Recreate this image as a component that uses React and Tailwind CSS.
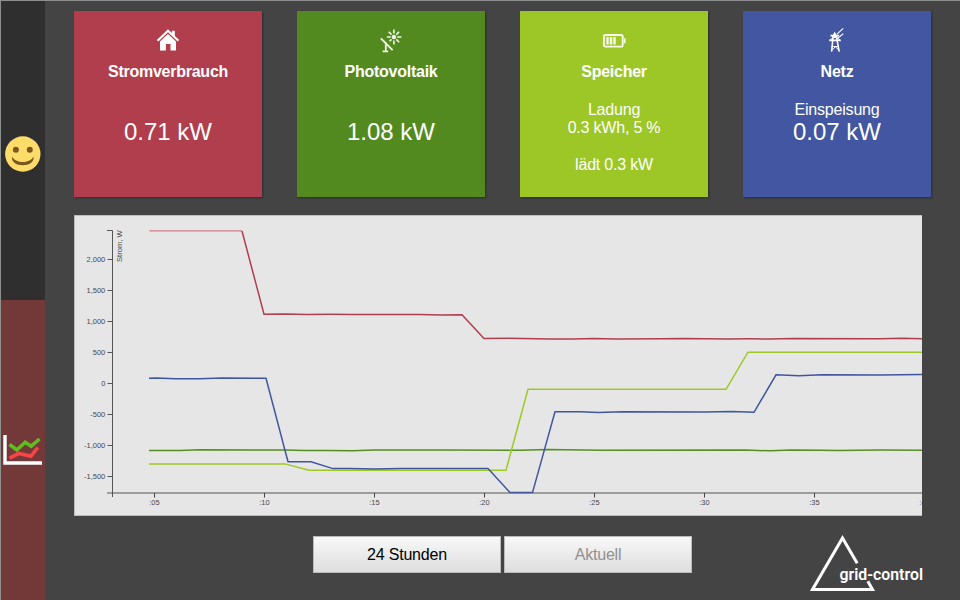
import React from "react";

const FONT = "font-['Liberation_Sans',Arial,sans-serif]";

function HouseIcon() {
  return (
    <svg width="24" height="26" viewBox="0 0 24 26" className="block">
      <path d="M1.6 13.8 12 3.8l10.4 10" fill="none" stroke="#fff" strokeWidth="2.1" />
      <path d="M15.9 3.8h2.9v6l-2.9-2.8z" fill="#fff" />
      <path d="M4 14.4 12 7l8 7.400v9h-5.500v-6.300h-4.600v6.300H4z" fill="#fff" />
    </svg>
  );
}

function SolarIcon() {
  return (
    <svg width="24" height="26" viewBox="0 0 24 26" className="block" stroke="#f2f8e8" fill="none">
      <circle cx="14.9" cy="10" r="2.2" fill="#f2f8e8" stroke="none" />
      <path
        d="M14.9 2.6v4M14.9 13.600v4M7.800 10h3.900M18.200 10h4.200M9.700 4.800l2.800 2.800M20.100 4.800l-2.800 2.800M20.100 15.200l-2.800-2.800M12.500 12.400l-1.900 1.900"
        strokeWidth="1.6"
      />
      <path d="M1.900 11.400 13.600 23.200" strokeWidth="1.9" />
      <path d="M6.800 15.500v8.700M3.600 24.400h5.600" strokeWidth="1.8" />
    </svg>
  );
}

function BatteryIcon() {
  return (
    <svg width="24" height="26" viewBox="0 0 24 26" className="block">
      <rect x="1.9" y="8" width="18.8" height="11.6" rx="1.6" fill="none" stroke="#fafdf0" strokeWidth="1.9" />
      <path d="M4.300 10h2.400v7.600H4.300zM7.800 10h2.400v7.600H7.800zM11.300 10h2.400v7.600h-2.400z" fill="#fafdf0" />
      <path d="M22.800 11.200v5" stroke="#fafdf0" strokeWidth="1.500" />
    </svg>
  );
}

function PylonIcon() {
  return (
    <svg width="24" height="26" viewBox="0 0 24 26" className="block" stroke="#fff" fill="none">
      <path d="M8.200 8.500 6.600 24.600M11.200 8.500l3 16.100" strokeWidth="1.600" />
      <path d="M9.700 4.400 12 8.900l-.6 2.200H8l-.6-2.200z" fill="#fff" stroke="none" />
      <path d="M5.400 8.700h8.700M4.300 13.300h11.500" strokeWidth="1.700" />
      <path d="M5 12.800 9 10.300h2l4 2.500M7.400 19.500h6M7.200 23l3.200-3.300 3.200 3.300" strokeWidth="1" />
      <path d="M12 7.200 18.200 1.300M12.300 11.600l5.900-4.800" strokeWidth="1.100" />
    </svg>
  );
}

function Card({ color, icon, title, children }) {
  return (
    <section
      className={`flex h-[186px] w-[188px] flex-col items-center pt-[16px] text-white shadow-[1px_1px_2px_rgba(0,0,0,0.35)] ${color}`}
    >
      {icon}
      <h2 className="mt-[10px] text-[16px] leading-[18px] font-bold tracking-[-0.25px] whitespace-nowrap">{title}</h2>
      {children}
    </section>
  );
}

const series = [
  {
    color: "#54901f",
    points:
      "149,450.5 180,450.5 200,449.8 285,450 305,450.6 330,450.4 352,450.8 375,450.1 440,450.1 520,450.2 548,449.5 600,450.3 745,450.1 770,450.8 792,450.1 820,450.2 838,450.6 880,450.1 922,450.3",
  },
  {
    color: "#9dc926",
    points: "149,463.9 285,463.9 309,470.3 506,470.3 528,389.3 726,389.3 748,352.2 922,352.2",
  },
  {
    color: "#4055a2",
    points:
      "149,378.3 156,378 175,378.7 200,378.7 222,378 266,378.3 288,461.7 311,461.7 333,468.6 350,468.4 375,469 400,468.6 488,468.6 510,492.6 532.5,492.6 555,411.7 580,411.8 599,412.4 622,411.8 705,411.9 732,411.5 754,412.3 776,374.8 799,375.8 822,374.7 880,375 922,374.5",
  },
  {
    color: "#b13e4c",
    points:
      "242,231 264,314.2 285,314 308,314.5 330,314.3 352,314.5 420,314.5 441,314.9 462,314.8 484,338.6 508,338.3 550,338.9 573,339.1 594,338.5 617,338.9 660,338.8 684,338.4 728,338.9 750,338.8 770,339.1 792,338.6 880,338.7 902,338.3 922,338.7",
  },
];

const yTicks = [
  ["2,000", 259.5],
  ["1,500", 290.5],
  ["1,000", 321.5],
  ["500", 352.5],
  ["0", 383.5],
  ["-500", 414.5],
  ["-1,000", 445.5],
  ["-1,500", 476.5],
];

const xTicks = [
  [":05", 154.5],
  [":10", 264.5],
  [":15", 374.5],
  [":20", 484.5],
  [":25", 594.5],
  [":30", 704.5],
  [":35", 814.5],
  [":40", 924.5],
];

function Chart() {
  return (
    <svg
      width="848"
      height="301"
      viewBox="74 215 848 301"
      className={`block bg-[#e6e6e6] ${FONT}`}
      fontSize="7.5"
      fill="#484848"
    >
      <rect x="74.5" y="215.5" width="848" height="300" fill="none" stroke="#bdbdbd" />
      <path d="M107 230.5h5.5V497M107 493h815" fill="none" stroke="#555" />
      {yTicks.map(([label, y]) => (
        <g key={label}>
          <path d={`M107.5 ${y}h5`} stroke="#555" />
          <text x="105.3" y={y + 2.5} textAnchor="end">{label}</text>
        </g>
      ))}
      {xTicks.map(([label, x]) => (
        <g key={label}>
          <path d={`M${x} 493v4.500`} stroke="#444" />
          <text x={x} y="505.2" textAnchor="middle">{label}</text>
        </g>
      ))}
      <text transform="translate(122 230.3) rotate(-90)" textAnchor="end" fontSize="7.6">Strom, W</text>
      <path d="M149.500 230.8H242" stroke="#cf7d85" strokeWidth="1.2" />
      {series.map((s) => (
        <polyline key={s.color} points={s.points} fill="none" stroke={s.color} strokeWidth="1.5" />
      ))}
    </svg>
  );
}

function Smiley() {
  return (
    <svg width="36" height="36" viewBox="0 0 36 36" className="block">
      <circle cx="17.800" cy="18" r="17.700" fill="#fddc6a" />
      <circle cx="10.900" cy="13.800" r="3" fill="#7b561f" />
      <circle cx="24.800" cy="13.800" r="3" fill="#7b561f" />
      <path d="M7 20.800C9.500 24.500 13.500 26 17.800 26s8.300-1.500 10.800-5.200c.8 5.200-4.400 8.500-10.800 8.500S6.200 26 7 20.800z" fill="#7b561f" />
    </svg>
  );
}

function TrendIcon() {
  return (
    <svg width="40" height="32" viewBox="0 0 40 32" className="block" fill="none">
      <path d="M2 1v28h37" stroke="#fff" strokeWidth="3.400" />
      <path d="M6.500 10.500 13.800 16l8.400-7.800 6 4L36.500 5" stroke="#62bb20" strokeWidth="3.600" />
      <path d="M6.500 24.200 16 19.500l12 2.700 6.800-8.700" stroke="#fb4444" strokeWidth="3.600" />
    </svg>
  );
}

function Logo() {
  return (
    <svg width="116" height="58" viewBox="808 534 116 58" className="block">
      <path
        d="M857.200 563.300 842.500 538 812.500 589.500H872.500L867.800 581.300"
        fill="none"
        stroke="#fff"
        strokeWidth="3"
      />
      <text
        x="839.500"
        y="579.500"
        fontSize="16"
        fontWeight="600"
        fill="#fff"
        textLength="83.500"
        lengthAdjust="spacingAndGlyphs"
        className="font-[Roboto,sans-serif]"
      >
        grid-control
      </text>
    </svg>
  );
}

export default function App() {
  return (
    <div className={`flex h-[600px] w-[960px] overflow-hidden border-t border-l border-[#8d908f] bg-[#444] ${FONT}`}>
      <nav className="flex w-[44px] shrink-0 flex-col">
        <button className="flex h-[299px] items-start bg-[#2f2f2f] pt-[135px] pl-[3.500px]">
          <Smiley />
        </button>
        <button className="flex h-[300px] items-start bg-[#733939] pt-[134px] pl-[2px]">
          <TrendIcon />
        </button>
      </nav>

      <main className="flex grow flex-col pt-[10px] pl-[29px]">
        <div className="flex gap-[35px]">
          <Card color="bg-[#b03e4c]" icon={<HouseIcon />} title="Stromverbrauch">
            <p className="mt-[37px] text-[24px] leading-[28px]">0.71 kW</p>
          </Card>
          <Card color="bg-[#528a1f]" icon={<SolarIcon />} title="Photovoltaik">
            <p className="mt-[37px] text-[24px] leading-[28px]">1.08 kW</p>
          </Card>
          <Card color="bg-[#9cc726]" icon={<BatteryIcon />} title="Speicher">
            <div className="mt-[20px] text-center text-[16px] leading-[18.300px] tracking-[-0.200px]">
              <p>Ladung</p>
              <p>0.3 kWh, 5 %</p>
              <p className="mt-[18.700px]">lädt 0.3 kW</p>
            </div>
          </Card>
          <Card color="bg-[#4256a1]" icon={<PylonIcon />} title="Netz">
            <p className="mt-[20px] text-[16px] leading-[18px] tracking-[-0.200px]">Einspeisung</p>
            <p className="-mt-px text-[24px] leading-[28px]">0.07 kW</p>
          </Card>
        </div>

        <div className="mt-[18px]">
          <Chart />
        </div>

        <footer className="flex h-[84px] items-start pt-[19px] pl-[239px]">
          <div className="mt-[1px] flex gap-[3px]">
            <button className="h-[37px] w-[188px] border border-[#bbb] bg-linear-to-b from-[#f8f8f8] to-[#dedede] text-[16px] tracking-[-0.200px] text-black">
              24 Stunden
            </button>
            <button className="h-[37px] w-[188px] border border-[#bbb] bg-linear-to-b from-[#f8f8f8] to-[#dedede] text-[16px] tracking-[-0.200px] text-[#919191]">
              Aktuell
            </button>
          </div>
          <div className="-mt-px ml-[116px]">
            <Logo />
          </div>
        </footer>
      </main>
    </div>
  );
}
